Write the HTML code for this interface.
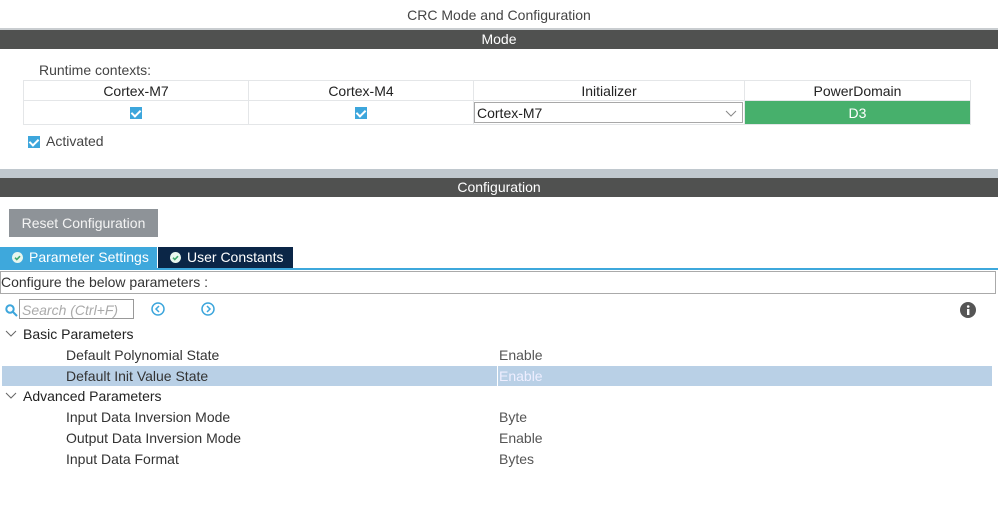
<!DOCTYPE html><html><head><style>
body{margin:0;width:998px;height:516px;background:#fff;font-family:"Liberation Sans",sans-serif;font-size:14px;color:#222;position:relative;overflow:hidden}
.a{position:absolute;white-space:nowrap}
.bar{position:absolute;left:0;width:998px;background:#505150;color:#fff;text-align:center;font-size:14px}
.cb{position:absolute;width:12px;height:12px;background:#3da6dc}
.cb:after{content:"";position:absolute;left:3px;top:1px;width:4px;height:7px;border:solid #fff;border-width:0 2px 2px 0;transform:rotate(45deg)}
td{border:1px solid #e4e6e8;text-align:center;padding:0;font-size:14px}
.ti{display:inline-block;vertical-align:-1px;margin:0 6px 0 12px}
</style></head><body>
<div class="a" style="left:0;width:998px;text-align:center;top:7px;color:#444;font-size:14px">CRC Mode and Configuration</div>
<div class="a" style="left:0;top:28px;width:998px;height:2px;background:#c9cdd0"></div>
<div class="bar" style="top:30px;height:19px;line-height:19px">Mode</div>
<div class="a" style="left:39px;top:62px;color:#444">Runtime contexts:</div>
<table style="position:absolute;left:23px;top:80px;border-collapse:collapse;width:948px">
<tr style="height:20px"><td style="width:224px">Cortex-M7</td><td style="width:224px">Cortex-M4</td><td style="width:270px">Initializer</td><td>PowerDomain</td></tr>
<tr style="height:24px"><td style="position:relative"><span class="cb" style="left:106px;top:6px"></span></td><td style="position:relative"><span class="cb" style="left:106px;top:6px"></span></td>
<td style="text-align:left;position:relative"><div style="position:absolute;left:0;top:1px;right:1px;bottom:1px;border:1px solid #a8a8a8;line-height:20px;padding-left:2px">Cortex-M7<svg style="position:absolute;right:5px;top:7px" width="12" height="7"><path d="M1 1l5 5 5-5" fill="none" stroke="#888"/></svg></div></td>
<td style="background:#47b06c;color:#fff">D3</td></tr></table>
<span class="cb" style="left:28px;top:136px"></span>
<div class="a" style="left:46px;top:133px;color:#444">Activated</div>
<div class="a" style="left:0;top:169px;width:998px;height:9px;background:#c0c8ce"></div>
<div class="bar" style="top:178px;height:19px;line-height:19px">Configuration</div>
<div class="a" style="left:9px;top:209px;width:149px;height:28px;background:#8e9398;color:#f4f4f4;line-height:28px;text-align:center">Reset Configuration</div>
<div class="a" style="left:0;top:247px;width:157px;height:21px;background:#3ea8dc;color:#fff;line-height:21px"><svg class="ti" width="11" height="11"><circle cx="5.5" cy="5.5" r="5.5" fill="#e8f6ee"/><path d="M3 5.7l1.8 1.8L8 4.2" fill="none" stroke="#3ea86c" stroke-width="1.6"/></svg>Parameter Settings</div>
<div class="a" style="left:158px;top:247px;width:135px;height:21px;background:#0b2647;color:#fff;line-height:21px"><svg class="ti" width="11" height="11"><circle cx="5.5" cy="5.5" r="5.5" fill="#e8f6ee"/><path d="M3 5.7l1.8 1.8L8 4.2" fill="none" stroke="#3ea86c" stroke-width="1.6"/></svg>User Constants</div>
<div class="a" style="left:0;top:268px;width:998px;height:2px;background:#3ea8dc"></div>
<div class="a" style="left:0;top:271px;width:994px;height:21px;border:1px solid #aaa;line-height:21px;color:#333">Configure the below parameters :</div>
<svg class="a" style="left:5px;top:304px" width="13" height="13"><circle cx="5" cy="5" r="3.7" fill="none" stroke="#3da6dc" stroke-width="2"/><line x1="8" y1="8" x2="12" y2="12" stroke="#3da6dc" stroke-width="2"/></svg>
<div class="a" style="left:19px;top:299px;height:20px;border:1px solid #999;color:#aaa;font-style:italic;line-height:20px;padding-left:2px;box-sizing:border-box;width:115px">Search (Ctrl+F)</div>
<svg class="a" style="left:151px;top:302px" width="14" height="14"><circle cx="7" cy="7" r="6" fill="none" stroke="#3da6dc" stroke-width="1.5"/><path d="M8 4L5 7l3 3" fill="none" stroke="#3da6dc" stroke-width="1.5"/></svg>
<svg class="a" style="left:201px;top:302px" width="14" height="14"><circle cx="7" cy="7" r="6" fill="none" stroke="#3da6dc" stroke-width="1.5"/><path d="M6 4l3 3-3 3" fill="none" stroke="#3da6dc" stroke-width="1.5"/></svg>
<svg class="a" style="left:960px;top:302px" width="16" height="16"><circle cx="8" cy="8" r="8" fill="#555"/><rect x="7" y="7" width="2.4" height="6" fill="#fff"/><circle cx="8.2" cy="4.5" r="1.3" fill="#fff"/></svg>
<div class="a" style="left:2px;top:366px;width:990px;height:20px;background:#b9d0e6"></div>
<div class="a" style="left:497px;top:366px;width:1px;height:20px;background:#fff"></div>
<svg class="a" style="left:5px;top:330px" width="12" height="8"><path d="M1 1l5 5 5-5" fill="none" stroke="#666"/></svg>
<svg class="a" style="left:5px;top:392px" width="12" height="8"><path d="M1 1l5 5 5-5" fill="none" stroke="#666"/></svg>
<div class="a" style="left:23px;top:326px">Basic Parameters</div>
<div class="a" style="left:66px;top:347px;color:#333">Default Polynomial State</div><div class="a" style="left:499px;top:347px;color:#555">Enable</div>
<div class="a" style="left:66px;top:368px;color:#333">Default Init Value State</div><div class="a" style="left:499px;top:368px;color:#eef">Enable</div>
<div class="a" style="left:23px;top:388px">Advanced Parameters</div>
<div class="a" style="left:66px;top:409px;color:#333">Input Data Inversion Mode</div><div class="a" style="left:499px;top:409px;color:#555">Byte</div>
<div class="a" style="left:66px;top:430px;color:#333">Output Data Inversion Mode</div><div class="a" style="left:499px;top:430px;color:#555">Enable</div>
<div class="a" style="left:66px;top:451px;color:#333">Input Data Format</div><div class="a" style="left:499px;top:451px;color:#555">Bytes</div>
</body></html>
